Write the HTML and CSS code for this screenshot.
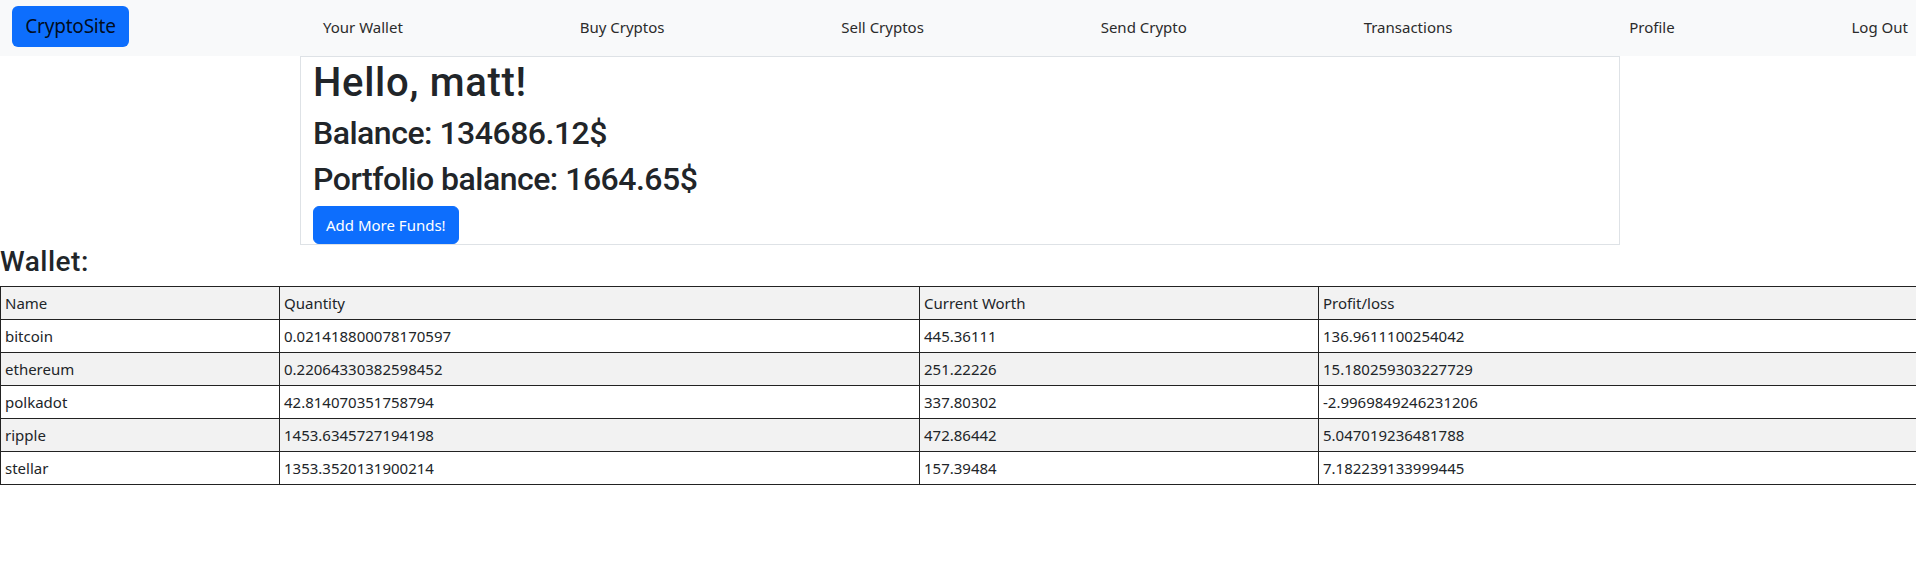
FILE: index.html
```html
<!DOCTYPE html>
<html lang="en">
<head>
<meta charset="utf-8">
<title>CryptoSite</title>
<link rel="stylesheet" href="styles.css">
</head>
<body>
<nav class="navbar">
  <a class="brand" href="#">CryptoSite</a>
  <ul class="nav-links">
    <li><a class="nav-link" href="#">Your Wallet</a></li>
    <li><a class="nav-link" href="#">Buy Cryptos</a></li>
    <li><a class="nav-link" href="#">Sell Cryptos</a></li>
    <li><a class="nav-link" href="#">Send Crypto</a></li>
    <li><a class="nav-link" href="#">Transactions</a></li>
    <li><a class="nav-link" href="#">Profile</a></li>
    <li><a class="nav-link" href="#">Log Out</a></li>
  </ul>
</nav>
<section class="summary">
  <h1 class="hello">Hello, matt!</h1>
  <h2 class="balance">Balance: 134686.12$</h2>
  <h2 class="balance">Portfolio balance: 1664.65$</h2>
  <button class="btn-funds" type="button">Add More Funds!</button>
</section>
<h3 class="wallet-title">Wallet:</h3>
<div class="table-wrap">
  <table class="wallet">
    <colgroup>
      <col class="c1"><col class="c2"><col class="c3"><col class="c4">
    </colgroup>
    <tr><td>Name</td><td>Quantity</td><td>Current Worth</td><td>Profit/loss</td></tr>
    <tr><td>bitcoin</td><td>0.021418800078170597</td><td>445.36111</td><td>136.9611100254042</td></tr>
    <tr><td>ethereum</td><td>0.22064330382598452</td><td>251.22226</td><td>15.180259303227729</td></tr>
    <tr><td>polkadot</td><td>42.814070351758794</td><td>337.80302</td><td>-2.9969849246231206</td></tr>
    <tr><td>ripple</td><td>1453.6345727194198</td><td>472.86442</td><td>5.047019236481788</td></tr>
    <tr><td>stellar</td><td>1353.3520131900214</td><td>157.39484</td><td>7.182239133999445</td></tr>
  </table>
</div>
</body>
</html>
```
FILE: styles.css
```css
* { box-sizing: border-box; }
html, body { margin: 0; padding: 0; }
body {
  font-family: "Noto Sans", "Open Sans", sans-serif;
  font-size: 16px;
  line-height: 1.5;
  color: #212529;
  background: #fff;
}
.navbar {
  display: flex;
  align-items: flex-start;
  height: 56px;
  padding-top: 6px;
  background: #f8f9fa;
}
.brand {
  display: block;
  margin-left: 12px;
  width: 117px;
  height: 41px;
  line-height: 41px;
  text-align: center;
  font-size: 19px;
  color: rgba(0, 0, 0, 0.9);
  background: #0d6efd;
  border-radius: 6px;
  text-decoration: none;
  letter-spacing: -0.2px;
}
.nav-links {
  flex: 1;
  display: flex;
  justify-content: space-between;
  list-style: none;
  margin: 0 0 0 186px;
  padding: 0;
}
.nav-link {
  display: block;
  padding: 8px 8px;
  font-size: 15px;
  line-height: 14px;
  margin-top: 6px;
  color: #2b2b2b;
  text-decoration: none;
}
.summary {
  width: 1320px;
  margin-left: 300px;
  padding: 2px 12px 0;
  border: 1px solid #dee2e6;
}
.hello,
.balance,
.wallet-title {
  font-family: Roboto, "Noto Sans", sans-serif;
  font-weight: 500;
  line-height: 1.2;
}
.hello {
  margin: 0 0 7px;
  font-size: 40px;
  letter-spacing: 0.7px;
}
.balance {
  margin: 0 0 8px;
  font-size: 32px;
  letter-spacing: -0.5px;
}
.balance + .balance { margin-bottom: 7px; }
.btn-funds {
  display: block;
  height: 38px;
  padding: 0 12px;
  font-family: inherit;
  font-size: 15px;
  color: #fff;
  background: #0d6efd;
  border: 1px solid #0d6efd;
  border-radius: 6px;
}
.wallet-title {
  margin: 0 0 8px;
  font-size: 28px;
  letter-spacing: 0.5px;
}
.table-wrap {
  overflow: hidden;
}
.wallet {
  width: calc(100% + 4px);
  border-collapse: collapse;
  font-size: 15px;
}
.wallet td {
  height: 33px;
  padding: 0 4px;
  border: 1px solid #222;
  vertical-align: middle;
}
.wallet tr:nth-child(odd) { background: #f2f2f2; }
.c1 { width: 279px; }
.c2 { width: 640px; }
.c3 { width: 399px; }
```
